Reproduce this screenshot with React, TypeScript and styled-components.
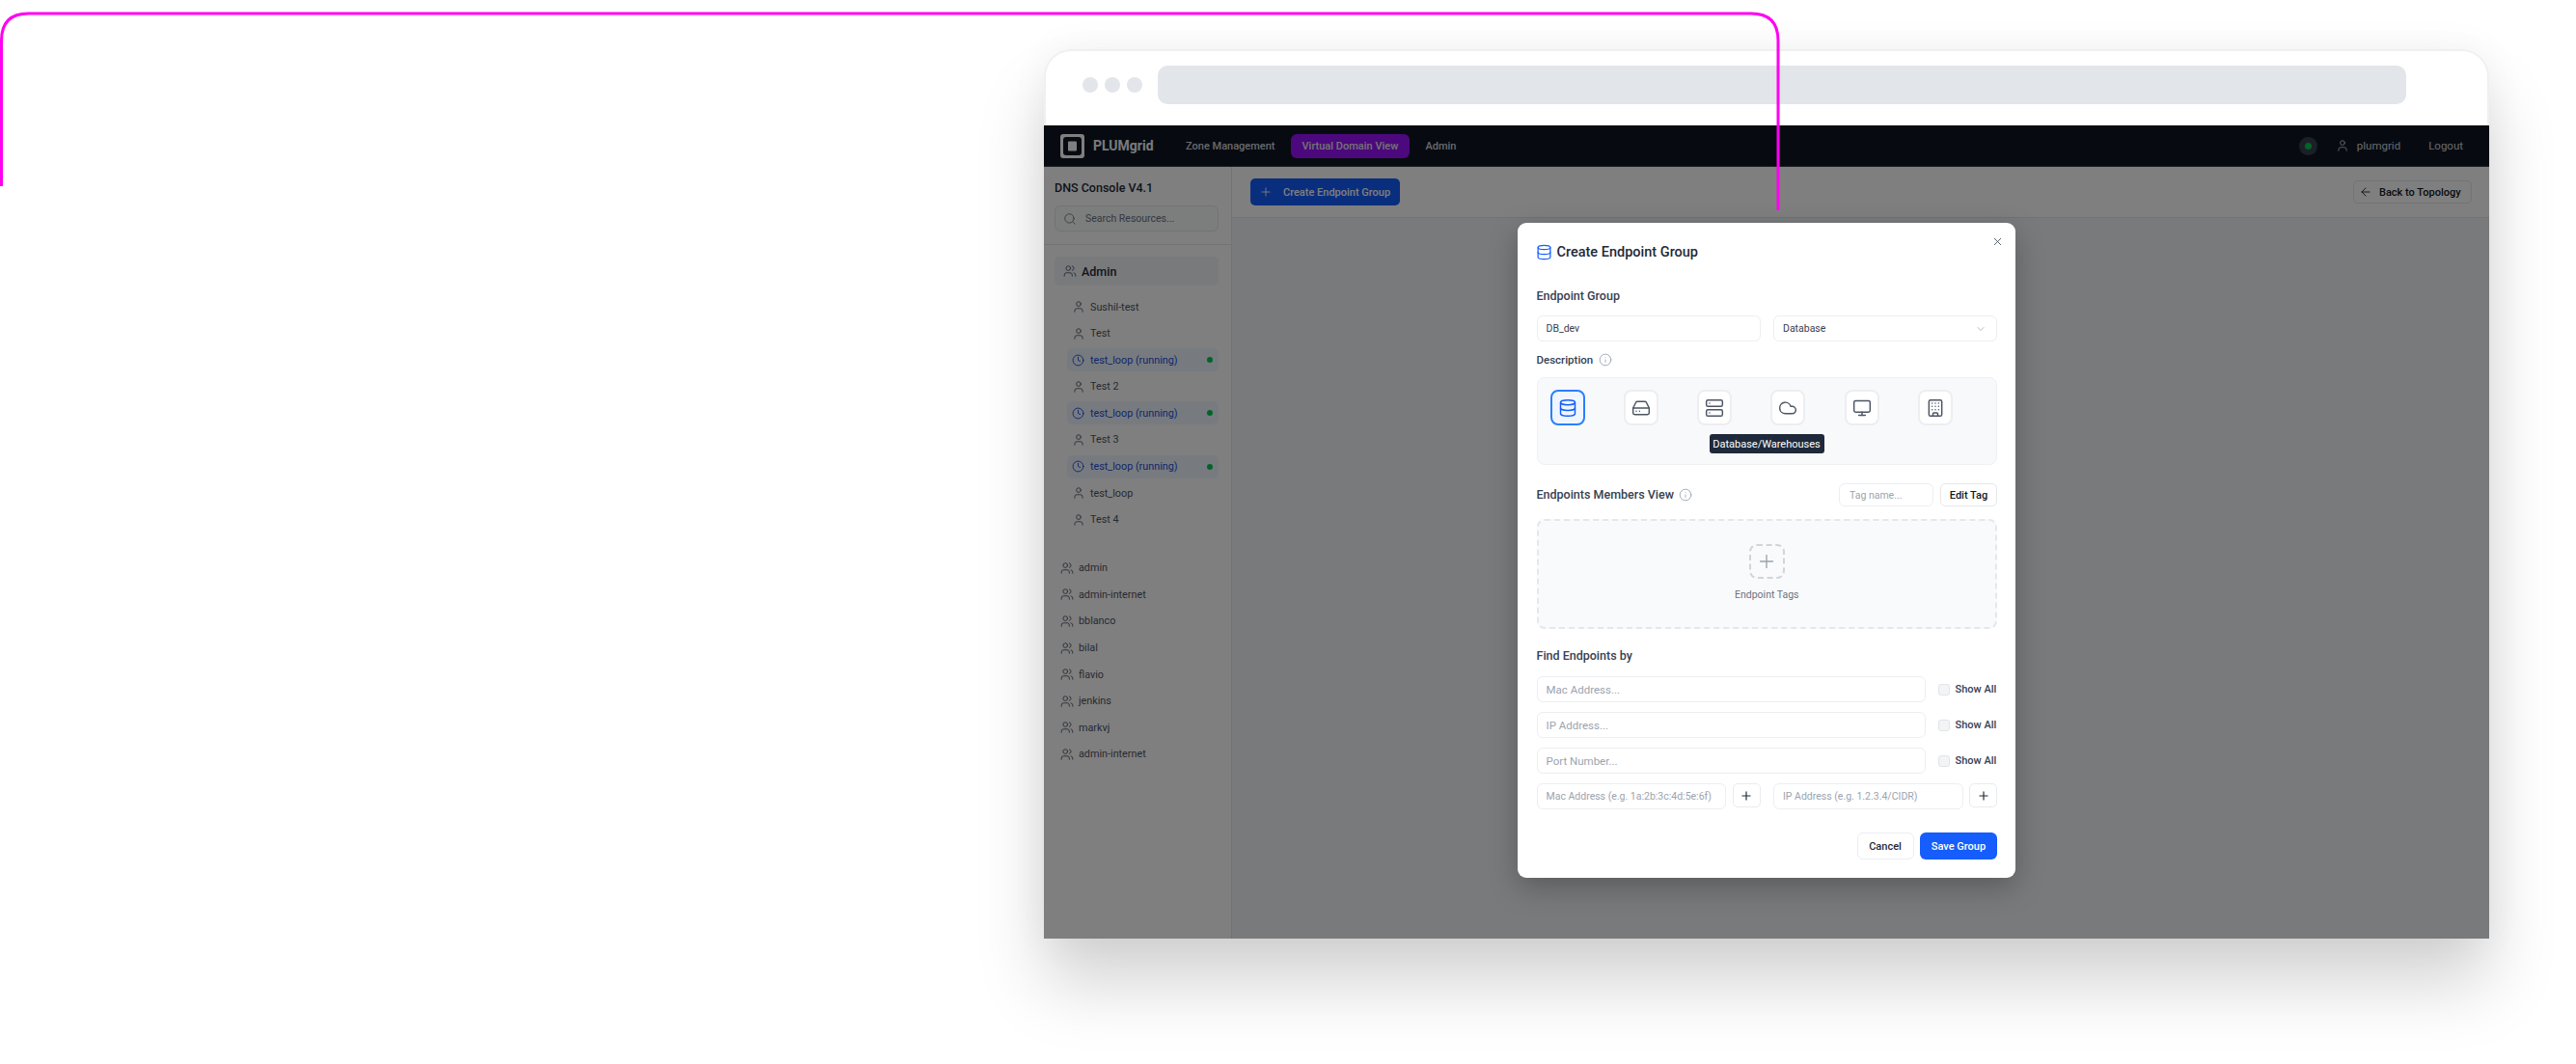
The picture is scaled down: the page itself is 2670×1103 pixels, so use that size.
import React from 'react';
import styled, { createGlobalStyle } from 'styled-components';
import {
  ArrowLeft,
  Building,
  ChevronDown,
  Clock,
  Cloud,
  Database,
  HardDrive,
  Info,
  Monitor,
  Plus,
  Search,
  Server,
  User,
  Users,
  X,
} from 'lucide-react';

const FONT = 'Roboto, "Noto Sans", "Liberation Sans", sans-serif';

const GlobalStyle = createGlobalStyle`
  * { box-sizing: border-box; }
  html, body { margin: 0; padding: 0; background: #fff; }
  body { font-family: ${FONT}; overflow: hidden; }
  svg { flex-shrink: 0; }
`;

const Page = styled.div`
  position: relative;
  width: 2670px;
  height: 1103px;
  padding: 51px 0 0 1082px;
  background: #fff;
  overflow: hidden;
`;

const Accent = styled.svg`
  position: absolute;
  left: 0;
  top: 0;
  z-index: 5;
  pointer-events: none;
`;

const BrowserFrame = styled.div`
  display: flex;
  flex-direction: column;
  width: 1498px;
  height: 922px;
  border-radius: 28px 28px 0 0;
  background: #fff;
  box-shadow: 0 48px 70px 0 rgba(0, 0, 0, 0.17), 0 0 40px rgba(0, 0, 0, 0.05);
`;

const TitleBar = styled.div`
  display: flex;
  align-items: center;
  height: 79px;
  padding: 0 84px 8px 38px;
  border: 2px solid #f0f0f1;
  border-bottom: none;
  border-radius: 28px 28px 0 0;
  background: #fff;
`;

const Dots = styled.div`
  display: flex;
  gap: 7px;
  margin-right: 16px;
`;

const Dot = styled.span`
  width: 16px;
  height: 16px;
  border-radius: 50%;
  background: #e2e5ea;
`;

const UrlBar = styled.div`
  flex: 1;
  height: 40px;
  border-radius: 10px;
  background: #e2e5ea;
`;

const AppShell = styled.div`
  position: relative;
  flex: 1;
  display: flex;
  flex-direction: column;
  min-height: 0;
`;

const Nav = styled.header`
  display: flex;
  align-items: center;
  height: 43px;
  padding: 0 27px 0 17px;
  background: #0f1623;
  border-bottom: 1px solid #374151;
`;

const LogoMark = styled.svg`
  width: 25px;
  height: 25px;
  margin-right: 9px;
`;

const Brand = styled.span`
  width: 65px;
  margin-right: 19px;
  font-size: 14px;
  font-weight: 700;
  color: #f3f4f6;
  white-space: nowrap;
`;

const NavItem = styled.span<{ $active?: boolean }>`
  display: flex;
  align-items: center;
  height: 25px;
  padding: 0 12px;
  margin-right: 4px;
  border-radius: 6px;
  font-size: 11px;
  font-weight: 500;
  color: ${(p) => (p.$active ? '#e5e7eb' : '#d1d5db')};
  background: ${(p) => (p.$active ? '#9810fa' : 'transparent')};
`;

const NavRight = styled.div`
  display: flex;
  align-items: center;
  margin-left: auto;
  font-size: 11.5px;
  color: #d1d5db;
`;

const StatusDot = styled.span`
  display: flex;
  align-items: center;
  justify-content: center;
  width: 19px;
  height: 19px;
  margin-right: 19px;
  border-radius: 50%;
  background: #374151;

  &::after {
    content: '';
    width: 7px;
    height: 7px;
    border-radius: 50%;
    background: #00c951;
  }
`;

const NavUser = styled.span`
  display: flex;
  align-items: center;
  gap: 8px;
  margin-right: 29px;
`;

const Body = styled.div`
  flex: 1;
  display: flex;
  min-height: 0;
`;

const Sidebar = styled.aside`
  width: 195px;
  flex-shrink: 0;
  background: #fff;
  border-right: 1px solid #e5e7eb;
`;

const SideHead = styled.div`
  padding: 13px 13px 13px 11px;
  border-bottom: 1px solid #e5e7eb;
`;

const SideTitle = styled.div`
  height: 18px;
  margin-bottom: 9px;
  font-size: 12.5px;
  line-height: 18px;
  font-weight: 500;
  color: #1f2937;
`;

const SideSearch = styled.div`
  display: flex;
  align-items: center;
  gap: 9px;
  height: 27px;
  padding-left: 8px;
  border: 1px solid #e5e7eb;
  border-radius: 6px;
  background: #f9fafb;
  font-size: 10.5px;
  color: #6b7280;

  svg { color: #6b7280; }
`;

const Tree = styled.div`
  display: flex;
  flex-direction: column;
  padding: 12px 13px 0 11px;
`;

const AdminRow = styled.div`
  display: flex;
  align-items: center;
  gap: 5px;
  height: 30px;
  padding-left: 9px;
  margin-bottom: 10px;
  border-radius: 5px;
  background: #f3f4f6;
  font-size: 12.5px;
  font-weight: 500;
  color: #1f2937;

  svg { color: #4b5563; }
`;

const ChildList = styled.div`
  display: flex;
  flex-direction: column;
  gap: 3.6px;
  margin-bottom: 26px;
  padding-left: 13px;
`;

const ChildRow = styled.div<{ $running?: boolean }>`
  display: flex;
  align-items: center;
  gap: ${(p) => (p.$running ? '6px' : '5px')};
  height: 24px;
  padding-left: 5px;
  padding-right: 6px;
  border-radius: 5px;
  font-size: 10.8px;
  color: ${(p) => (p.$running ? '#1d4ed8' : '#4b5563')};
  background: ${(p) => (p.$running ? '#eff6ff' : 'transparent')};
`;

const RunDot = styled.span`
  width: 6px;
  height: 6px;
  margin-left: auto;
  border-radius: 50%;
  background: #00c951;
`;

const GroupList = styled.div`
  display: flex;
  flex-direction: column;
  gap: 3.6px;
`;

const GroupRow = styled.div`
  display: flex;
  align-items: center;
  gap: 5px;
  height: 24px;
  padding-left: 6px;
  font-size: 10.8px;
  color: #4b5563;
`;

const Main = styled.main`
  flex: 1;
  background: #f3f4f6;
`;

const Toolbar = styled.div`
  display: flex;
  align-items: center;
  justify-content: space-between;
  height: 53px;
  padding: 0 18px 0 19px;
  background: #fff;
  border-bottom: 1px solid #e5e7eb;
`;

const CreateButton = styled.button`
  display: flex;
  align-items: center;
  gap: 11px;
  width: 155px;
  height: 28px;
  padding: 0 0 0 9px;
  border: none;
  border-radius: 5px;
  background: #155dfc;
  font: 500 11px ${FONT};
  color: #fff;
  white-space: nowrap;
`;

const BackButton = styled.button`
  display: flex;
  align-items: center;
  gap: 7px;
  width: 123px;
  height: 24px;
  padding: 0 0 0 5px;
  border: 1px solid #e5e7eb;
  border-radius: 5px;
  background: #fff;
  font: 500 11px ${FONT};
  color: #111827;
  white-space: nowrap;
`;

const Overlay = styled.div`
  position: absolute;
  inset: 0;
  z-index: 2;
  display: flex;
  justify-content: center;
  align-items: flex-start;
  padding-top: 101px;
  background: rgba(0, 0, 0, 0.5);
`;

const Modal = styled.div`
  position: relative;
  width: 516px;
  height: 679px;
  padding: 23px 19px 0 19.5px;
  border-radius: 9px;
  background: #fff;
  box-shadow: 0 10px 30px rgba(0, 0, 0, 0.25);
`;

const CloseButton = styled.span`
  position: absolute;
  top: 12.5px;
  right: 12.5px;
  display: flex;
  color: #374151;
`;

const ModalTitle = styled.h2`
  display: flex;
  align-items: center;
  gap: 5px;
  height: 14px;
  margin: 0 0 31px;
  font-size: 14.5px;
  font-weight: 500;
  color: #1f2937;

  svg {
    margin-left: -1px;
    color: #155dfc;
  }
`;

const SectionLabel = styled.div<{ $small?: boolean }>`
  display: flex;
  align-items: center;
  gap: 5.5px;
  font-size: ${(p) => (p.$small ? '11.5px' : '12.5px')};
  line-height: 16px;
  font-weight: 500;
  color: #374151;

  svg { color: #9ca3af; }
`;

const TwoCols = styled.div`
  display: grid;
  grid-template-columns: 1fr 1fr;
  gap: 13.5px;
`;

const NameRow = styled(TwoCols)`
  margin-top: 12px;
`;

const DescLabel = styled(SectionLabel)`
  margin-top: 11px;
`;

const Field = styled.input<{ $h?: number }>`
  display: block;
  width: 100%;
  min-width: 0;
  height: ${(p) => p.$h ?? 27}px;
  padding: 0 9px;
  border: 1px solid #eceef1;
  border-radius: 6px;
  outline: none;
  background: #fff;
  font: 400 11.5px ${FONT};
  color: #374151;

  &::placeholder { color: #9ca3af; opacity: 1; }
`;

const NameField = styled(Field)`
  font-size: 10.5px;
`;

const SelectBox = styled.div`
  display: flex;
  align-items: center;
  justify-content: space-between;
  height: 27px;
  padding: 0 10px 0 9px;
  border: 1px solid #eceef1;
  border-radius: 6px;
  font-size: 10.5px;
  color: #374151;

  svg { color: #9ca3af; }
`;

const IconPanel = styled.div`
  position: relative;
  display: grid;
  grid-template-columns: repeat(6, 1fr);
  gap: 8px;
  height: 91px;
  margin-top: 10px;
  padding: 12px 13px;
  border: 1px solid #eef0f3;
  border-radius: 8px;
  background: #f8f9fb;
`;

const IconTile = styled.span<{ $active?: boolean }>`
  display: flex;
  align-items: center;
  justify-content: center;
  width: 36px;
  height: 37px;
  border: ${(p) => (p.$active ? '2px solid #2b7fff' : '2px solid #eceef1')};
  border-radius: 8px;
  background: ${(p) => (p.$active ? '#eff6ff' : '#fff')};
  color: ${(p) => (p.$active ? '#155dfc' : '#4b5563')};
`;

const Tooltip = styled.span`
  position: absolute;
  left: 178px;
  top: 58px;
  display: flex;
  align-items: center;
  justify-content: center;
  width: 119px;
  height: 20px;
  border-radius: 3px;
  background: #1e293b;
  font-size: 11px;
  color: #fff;
`;

const MembersHead = styled.div`
  display: flex;
  align-items: center;
  justify-content: space-between;
  margin-top: 19px;
`;

const TagTools = styled.div`
  display: flex;
  gap: 7px;
`;

const TagInput = styled(Field)`
  width: 98px;
  padding: 0 10px;
  font-size: 10.5px;
`;

const EditButton = styled.button`
  width: 59px;
  height: 24px;
  padding: 0;
  border: 1px solid #e5e7eb;
  border-radius: 5px;
  background: #fff;
  font: 500 11px ${FONT};
  color: #111827;
`;

const DropZone = styled.div`
  display: flex;
  flex-direction: column;
  align-items: center;
  height: 114px;
  margin-top: 13px;
  padding-top: 24px;
  border: 2px dashed #e5e7eb;
  border-radius: 8px;
  background: #f9fafb;
  font-size: 10.5px;
  color: #6b7280;
`;

const DropPlus = styled.span`
  display: flex;
  align-items: center;
  justify-content: center;
  width: 37px;
  height: 36px;
  margin-bottom: 10px;
  border: 2px dashed #d1d5db;
  border-radius: 8px;
  color: #9ca3af;
`;

const FindLabel = styled(SectionLabel)`
  margin: 20px 0 13px;
`;

const FindRows = styled.div`
  display: flex;
  flex-direction: column;
  gap: 10px;
`;

const FindRow = styled.div`
  display: flex;
  align-items: center;
`;

const FindField = styled(Field)`
  width: 403px;
  margin-right: 13px;
`;

const PairField = styled(Field)`
  font-size: 10.5px;
`;

const ShowAll = styled.label`
  display: flex;
  align-items: center;
  gap: 6px;
  font-size: 11px;
  font-weight: 500;
  color: #374151;
  white-space: nowrap;
`;

const Check = styled.span`
  width: 12px;
  height: 12px;
  border: 1px solid #e1e3e7;
  border-radius: 3px;
  background: #f3f4f6;
`;

const AddPair = styled.div`
  display: flex;
  align-items: flex-start;
  gap: 6.5px;
`;

const AddButton = styled.button`
  display: flex;
  align-items: center;
  justify-content: center;
  flex-shrink: 0;
  width: 29px;
  height: 25px;
  padding: 0;
  border: 1px solid #e9ebee;
  border-radius: 5px;
  background: #fff;
  color: #1f2937;
`;

const Footer = styled.div`
  display: flex;
  justify-content: flex-end;
  gap: 6.5px;
  margin-top: 24px;
`;

const CancelButton = styled.button`
  width: 59px;
  height: 28px;
  padding: 0;
  border: 1px solid #eceef1;
  border-radius: 6px;
  background: #fff;
  font: 500 11px ${FONT};
  color: #1f2937;
`;

const SaveButton = styled.button`
  width: 80px;
  height: 28px;
  padding: 0;
  border: none;
  border-radius: 6px;
  background: #155dfc;
  font: 500 11px ${FONT};
  color: #fff;
`;

const children = [
  { name: 'Sushil-test' },
  { name: 'Test' },
  { name: 'test_loop (running)', running: true },
  { name: 'Test 2' },
  { name: 'test_loop (running)', running: true },
  { name: 'Test 3' },
  { name: 'test_loop (running)', running: true },
  { name: 'test_loop' },
  { name: 'Test 4' },
];

const groups = ['admin', 'admin-internet', 'bblanco', 'bilal', 'flavio', 'jenkins', 'markvj', 'admin-internet'];

const endpointIcons = [Database, HardDrive, Server, Cloud, Monitor, Building];

const findFields = ['Mac Address...', 'IP Address...', 'Port Number...'];

const App: React.FC = () => {
  return (
    <Page>
      <GlobalStyle />
      <Accent width="1850" height="220" viewBox="0 0 1850 220" fill="none">
        <path d="M1.5 193V42Q1.5 14 29.5 14H1815Q1843 14 1843 42V218" stroke="#ff00f0" strokeWidth="3" />
      </Accent>
      <BrowserFrame>
        <TitleBar>
          <Dots>
            <Dot />
            <Dot />
            <Dot />
          </Dots>
          <UrlBar />
        </TitleBar>
        <AppShell>
          <Nav>
            <LogoMark viewBox="0 0 25 25">
              <rect width="25" height="25" rx="3" fill="#fff" />
              <rect x="3" y="3" width="19" height="19" rx="3" fill="#0f1623" />
              <rect x="8" y="7.5" width="9" height="10" rx="1" fill="#fff" />
            </LogoMark>
            <Brand>PLUMgrid</Brand>
            <NavItem>Zone Management</NavItem>
            <NavItem $active>Virtual Domain View</NavItem>
            <NavItem>Admin</NavItem>
            <NavRight>
              <StatusDot />
              <NavUser>
                <User size={14} strokeWidth={1.5} />
                plumgrid
              </NavUser>
              Logout
            </NavRight>
          </Nav>
          <Body>
            <Sidebar>
              <SideHead>
                <SideTitle>DNS Console V4.1</SideTitle>
                <SideSearch>
                  <Search size={14} strokeWidth={1.5} />
                  Search Resources...
                </SideSearch>
              </SideHead>
              <Tree>
                <AdminRow>
                  <Users size={14} strokeWidth={1.5} />
                  Admin
                </AdminRow>
                <ChildList>
                  {children.map((c, i) => (
                    <ChildRow key={i} $running={c.running}>
                      {c.running ? <Clock size={13} strokeWidth={1.75} /> : <User size={14} strokeWidth={1.5} />}
                      {c.name}
                      {c.running && <RunDot />}
                    </ChildRow>
                  ))}
                </ChildList>
                <GroupList>
                  {groups.map((g, i) => (
                    <GroupRow key={i}>
                      <Users size={14} strokeWidth={1.5} />
                      {g}
                    </GroupRow>
                  ))}
                </GroupList>
              </Tree>
            </Sidebar>
            <Main>
              <Toolbar>
                <CreateButton>
                  <Plus size={14} strokeWidth={1.5} />
                  Create Endpoint Group
                </CreateButton>
                <BackButton>
                  <ArrowLeft size={14} strokeWidth={1.5} />
                  Back to Topology
                </BackButton>
              </Toolbar>
            </Main>
          </Body>
          <Overlay>
            <Modal>
              <CloseButton>
                <X size={13} strokeWidth={1.5} />
              </CloseButton>
              <ModalTitle>
                <Database size={17} strokeWidth={1.75} />
                Create Endpoint Group
              </ModalTitle>
              <SectionLabel>Endpoint Group</SectionLabel>
              <NameRow>
                <NameField defaultValue="DB_dev" />
                <SelectBox>
                  Database
                  <ChevronDown size={12} strokeWidth={1.5} />
                </SelectBox>
              </NameRow>
              <DescLabel $small>
                Description
                <Info size={14} strokeWidth={1.5} />
              </DescLabel>
              <IconPanel>
                {endpointIcons.map((Icon, i) => (
                  <IconTile key={i} $active={i === 0}>
                    <Icon size={20} strokeWidth={1.75} />
                  </IconTile>
                ))}
                <Tooltip>Database/Warehouses</Tooltip>
              </IconPanel>
              <MembersHead>
                <SectionLabel>
                  Endpoints Members View
                  <Info size={14} strokeWidth={1.5} />
                </SectionLabel>
                <TagTools>
                  <TagInput $h={24} placeholder="Tag name..." />
                  <EditButton>Edit Tag</EditButton>
                </TagTools>
              </MembersHead>
              <DropZone>
                <DropPlus>
                  <Plus size={22} strokeWidth={1.5} />
                </DropPlus>
                Endpoint Tags
              </DropZone>
              <FindLabel>Find Endpoints by</FindLabel>
              <FindRows>
                {findFields.map((f) => (
                  <FindRow key={f}>
                    <FindField placeholder={f} />
                    <ShowAll>
                      <Check />
                      Show All
                    </ShowAll>
                  </FindRow>
                ))}
                <TwoCols>
                  <AddPair>
                    <PairField placeholder="Mac Address (e.g. 1a:2b:3c:4d:5e:6f)" />
                    <AddButton>
                      <Plus size={14} />
                    </AddButton>
                  </AddPair>
                  <AddPair>
                    <PairField placeholder="IP Address (e.g. 1.2.3.4/CIDR)" />
                    <AddButton>
                      <Plus size={14} />
                    </AddButton>
                  </AddPair>
                </TwoCols>
              </FindRows>
              <Footer>
                <CancelButton>Cancel</CancelButton>
                <SaveButton>Save Group</SaveButton>
              </Footer>
            </Modal>
          </Overlay>
        </AppShell>
      </BrowserFrame>
    </Page>
  );
};

export default App;
